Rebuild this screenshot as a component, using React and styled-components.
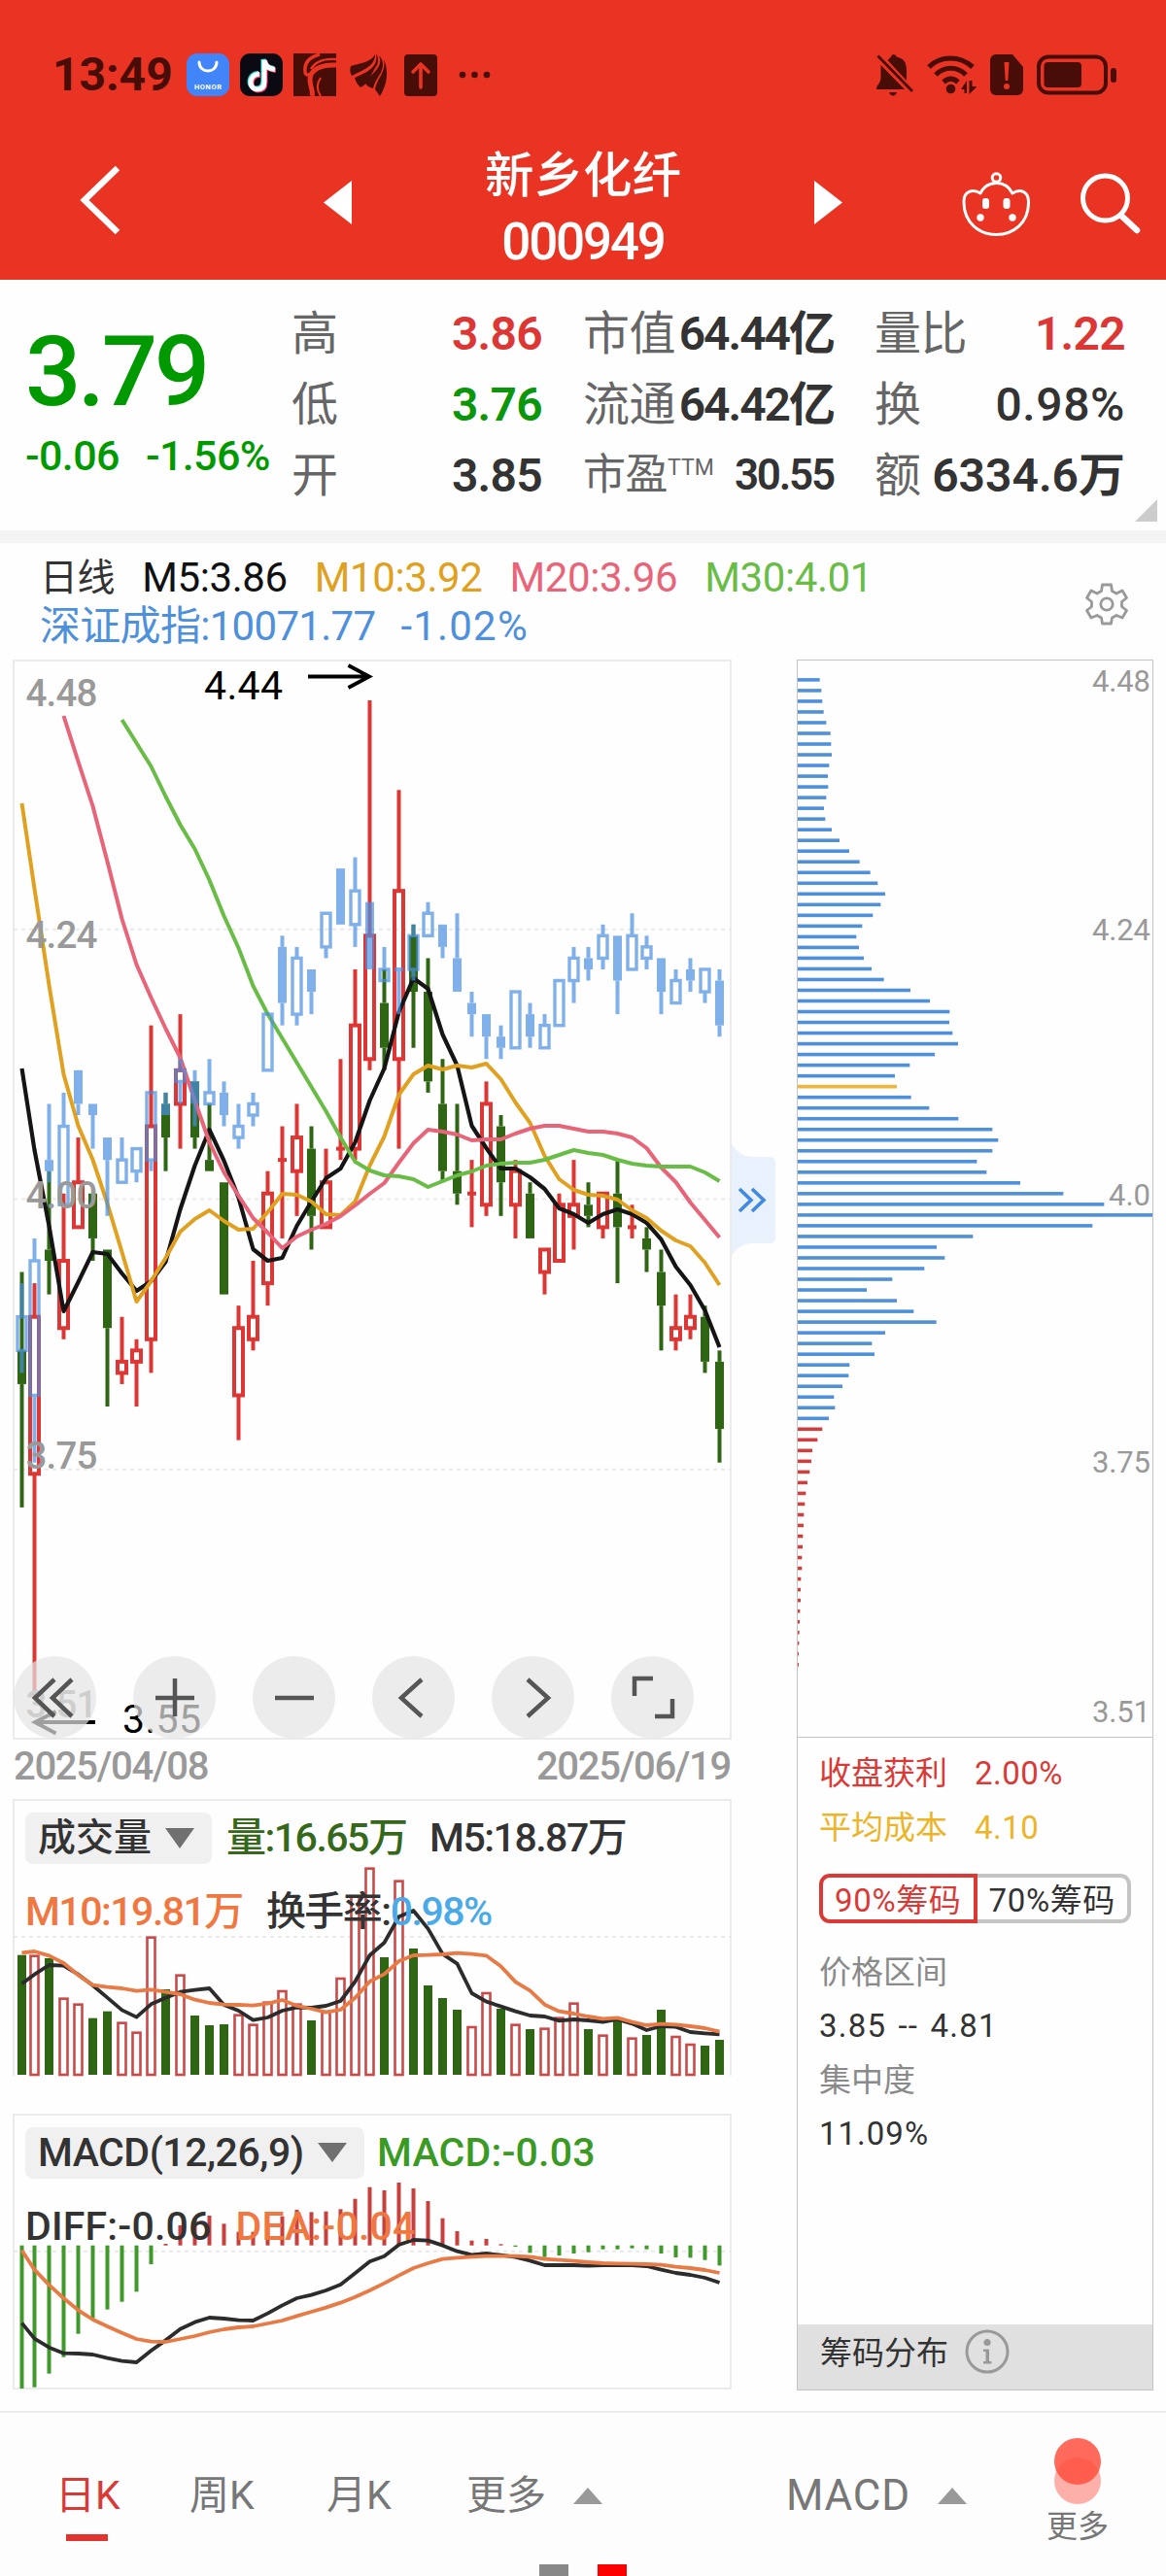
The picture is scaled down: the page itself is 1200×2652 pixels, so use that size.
import React from 'react';
import styled, { createGlobalStyle } from 'styled-components';

const GlobalStyle = createGlobalStyle`
  * {
    box-sizing: border-box;
  }
  body {
    margin: 0;
    background: #fefefe;
    font-family: Roboto, 'Noto Sans CJK SC', sans-serif;
    color: #333;
  }
  svg {
    display: block;
    flex-shrink: 0;
  }
`;

const Page = styled.div`
  width: 1200px;
  height: 2652px;
  overflow: hidden;
  background: #fefefe;
`;

const Header = styled.header`
  height: 288px;
  background: #e93323;
  color: #fff;
`;

const StatusBar = styled.div`
  display: flex;
  align-items: center;
  justify-content: space-between;
  height: 154px;
  padding: 0 50px 0 54px;
  color: #490d08;
`;

const StatusGroup = styled.div`
  display: flex;
  align-items: center;
  gap: ${(p) => p.$gap}px;
`;

const Time = styled.span`
  width: 127px;
  font-size: 48px;
  font-weight: 700;
  line-height: 56px;
`;

const Nav = styled.nav`
  display: flex;
  align-items: flex-start;
  padding-left: 80px;
`;

const NavIcon = styled.div`
  margin: ${(p) => p.$top}px 0 0 ${(p) => p.$left || 0}px;
`;

const TitleBox = styled.div`
  width: 204px;
  margin-left: 136px;
  text-align: center;
  white-space: nowrap;
`;

const StockName = styled.div`
  padding-top: 2px;
  font-size: 50.5px;
  font-weight: 500;
  line-height: 50px;
`;

const StockCode = styled.div`
  margin-top: 15px;
  font-size: 53px;
  font-weight: 500;
  letter-spacing: -2.2px;
  line-height: 56px;
`;

const Quote = styled.section`
  position: relative;
  display: grid;
  grid-template-columns: 258px 258px 258px 258px;
  column-gap: 42px;
  height: 258px;
`;

const PriceBox = styled.div`
  padding: 45px 0 0 26px;
  color: #009a00;
  white-space: nowrap;
`;

const Price = styled.div`
  font-size: 101px;
  font-weight: 500;
  letter-spacing: -3.4px;
  line-height: 100px;
`;

const Change = styled.div`
  display: flex;
  gap: 27px;
  margin-top: 11px;
  font-size: 43px;
  font-weight: 500;
  letter-spacing: -0.6px;
  line-height: 50px;
`;

const QuoteColumn = styled.div`
  padding-top: 19px;
`;

const QuoteRow = styled.div`
  display: flex;
  align-items: center;
  justify-content: space-between;
  height: 73px;
  line-height: 73px;
  white-space: nowrap;
`;

const QuoteLabel = styled.span`
  color: #666;
  font-size: ${(p) => p.$size || 48}px;
  letter-spacing: -0.5px;

  sup {
    position: relative;
    top: -15px;
    font-size: 23px;
    line-height: 0;
    letter-spacing: 0;
    vertical-align: baseline;
  }
`;

const QuoteValue = styled.span`
  color: ${(p) => p.$color || '#333'};
  font-size: ${(p) => p.$size || 48}px;
  font-weight: ${(p) => p.$weight || 600};
  letter-spacing: ${(p) => p.$spacing || -0.7}px;
`;

const Corner = styled.div`
  position: absolute;
  right: 9px;
  bottom: 9px;
  border-left: 23px solid transparent;
  border-bottom: 23px solid #ccc;
`;

const Divider = styled.div`
  height: 13px;
  background: #f4f4f4;
`;

const Indicators = styled.section`
  display: flex;
  justify-content: space-between;
  height: 120px;
  padding: 11px 39px 0 41px;
`;

const IndicatorLine = styled.div`
  display: flex;
  gap: ${(p) => p.$gap}px;
  height: 50px;
  font-size: 42px;
  line-height: 50px;
  letter-spacing: -0.4px;
  white-space: nowrap;
`;

const Colored = styled.span`
  color: ${(p) => p.$color};
  font-size: ${(p) => (p.$size ? `${p.$size}px` : 'inherit')};
  letter-spacing: ${(p) => (p.$spacing ? `${p.$spacing}px` : 'inherit')};
`;

const Content = styled.main`
  display: flex;
  height: 1803px;
  padding-left: 13px;
`;

const Charts = styled.div`
  width: 740px;
`;

const ChartPanel = styled.div`
  position: relative;
  height: ${(p) => p.$height}px;
  margin-top: ${(p) => p.$top || 0}px;
  border: 2px solid #ebebeb;
  border-bottom-width: ${(p) => (p.$open ? 0 : 2)}px;
`;

const ChartSvg = styled.svg`
  position: absolute;
  left: -2px;
  top: -2px;
  overflow: visible;
`;

const PanelText = styled.div`
  position: relative;
  padding: 10px 0 0 11px;
`;

const PanelLine = styled.div`
  display: flex;
  align-items: center;
  height: 76px;
  margin-top: ${(p) => p.$top || 0}px;
  gap: ${(p) => p.$gap}px;
  font-size: 41px;
  font-weight: 500;
  letter-spacing: ${(p) => p.$spacing || -1.3}px;
  line-height: 54px;
  white-space: nowrap;
`;

const Picker = styled.div`
  display: flex;
  align-items: center;
  justify-content: space-between;
  width: ${(p) => p.$width}px;
  height: 53px;
  padding: 0 18px 0 13px;
  border-radius: 8px;
  background: #f0f0f0;
  font-size: ${(p) => p.$size || 39}px;
  letter-spacing: ${(p) => p.$spacing || 0}px;
`;

const Triangle = styled.i`
  width: 0;
  border: ${(p) => p.$w}px solid transparent;
  border-width: ${(p) => (p.$down ? `${p.$h}px ${p.$w}px 0` : `0 ${p.$w}px ${p.$h}px`)};
  border-${(p) => (p.$down ? 'top' : 'bottom')}-color: ${(p) => p.$color};
`;

const Controls = styled.div`
  position: absolute;
  left: -1px;
  bottom: -1px;
  display: flex;
  gap: 38px;
`;

const RoundButton = styled.button`
  display: flex;
  align-items: center;
  justify-content: center;
  width: 85px;
  height: 85px;
  padding: 0;
  border: 0;
  border-radius: 50%;
  background: rgba(228, 228, 228, 0.7);
`;

const Dates = styled.div`
  display: flex;
  justify-content: space-between;
  height: 61px;
  padding: 1px 1px 0 1px;
  color: #999;
  font-size: 40px;
  font-weight: 500;
  letter-spacing: -1.3px;
  line-height: 54px;
`;

const Expander = styled.div`
  margin: 497px 21px 0 -1px;
  width: 47px;
`;

const ChipPanel = styled.aside`
  display: flex;
  flex-direction: column;
  width: 367px;
  height: 1782px;
  border: 1px solid #c4c4c4;
`;

const ChipInfo = styled.div`
  flex: 1;
  padding: 9px 22px 0 22px;
  border-top: 1px solid #c4c4c4;
  font-size: 33px;
`;

const ChipRow = styled.div`
  display: flex;
  gap: 28px;
  height: ${(p) => p.$height || 56}px;
  line-height: ${(p) => p.$height || 56}px;
  color: ${(p) => p.$color || '#333'};
  letter-spacing: ${(p) => p.$spacing || 0}px;
  word-spacing: ${(p) => p.$word || 0}px;
  white-space: nowrap;
`;

const Segments = styled.div`
  display: flex;
  width: 321px;
  height: 51px;
  margin: 19px 0 24px;
`;

const Segment = styled.div`
  flex: 1;
  border: 4px solid ${(p) => (p.$active ? '#d93a36' : '#c4c4c4')};
  border-left-width: ${(p) => (p.$active ? 4 : 0)}px;
  border-radius: ${(p) => (p.$active ? '11px 0 0 11px' : '0 11px 11px 0')};
  color: ${(p) => (p.$active ? '#d93a36' : '#333')};
  font-size: 33px;
  letter-spacing: 0.6px;
  line-height: 47px;
  text-align: center;
  white-space: nowrap;
`;

const ChipFooter = styled.div`
  display: flex;
  align-items: center;
  gap: 17px;
  height: 67px;
  padding: 0 0 11px 23px;
  background: #e0e0e0;
  font-size: 33px;

  span {
    margin-top: -2px;
  }
`;

const BottomBar = styled.footer`
  position: relative;
  display: flex;
  height: 170px;
  border-top: 2px solid #ececec;
  background: #fdfdfd;
  color: #777;
  font-size: 41px;
  line-height: 60px;
  white-space: nowrap;
`;

const Tab = styled.div`
  display: flex;
  align-items: center;
  gap: 28px;
  position: relative;
  height: 60px;
  margin: 55px 0 0 ${(p) => p.$left}px;
  width: ${(p) => p.$width}px;
  color: ${(p) => (p.$active ? '#d93a36' : '#777')};
  font-size: ${(p) => p.$size || 41}px;
  letter-spacing: ${(p) => p.$spacing || 0}px;

  &::after {
    content: '';
    display: ${(p) => (p.$active ? 'block' : 'none')};
    position: absolute;
    left: 11px;
    top: 70px;
    width: 43px;
    height: 7px;
    background: #e0352f;
  }
`;

const MoreTab = styled.div`
  display: flex;
  flex-direction: column;
  align-items: center;
  width: 64px;
  margin: 25px 0 0 76px;
  font-size: 32px;
  line-height: 44px;
`;

const Pager = styled.div`
  position: absolute;
  left: 555px;
  bottom: 0;
  display: flex;
  gap: 30px;
`;

const PageMark = styled.i`
  width: 30px;
  height: 12px;
  background: ${(p) => p.$color};
`;

const RED = '#dc3735';
const GREEN = '#2f6614';
const BLUE = '#4a90e2';

// [high, body top, body bottom, low, rising], prices in cents
const CANDLES = [
  [393, 386, 383, 372, 0], [392, 389, 375, 355, 1], [402, 395, 394, 391, 0], [400, 394, 388, 387, 1],
  [405, 401, 397, 397, 1], [400, 400, 396, 394, 0], [395, 395, 388, 381, 0], [389, 385, 384, 383, 1],
  [387, 386, 385, 381, 1], [415, 406, 387, 384, 1], [409, 408, 405, 402, 0], [416, 411, 408, 404, 1],
  [410, 410, 405, 404, 0], [408, 403, 402, 402, 0], [401, 401, 391, 391, 0], [390, 388, 382, 378, 1],
  [394, 389, 387, 386, 1], [402, 400, 392, 390, 1], [406, 403, 403, 396, 1], [408, 405, 402, 398, 1],
  [406, 404, 398, 395, 0], [404, 401, 397, 397, 1], [412, 404, 404, 403, 1], [420, 415, 404, 403, 1],
  [444, 423, 412, 411, 1], [420, 417, 413, 411, 0], [436, 427, 412, 404, 1], [424, 423, 418, 413, 0],
  [421, 418, 410, 409, 0], [412, 408, 402, 401, 0], [408, 402, 400, 399, 0], [403, 400, 400, 397, 1],
  [410, 408, 399, 398, 1], [407, 406, 401, 398, 0], [403, 402, 399, 396, 1], [401, 400, 396, 396, 0],
  [395, 395, 393, 391, 1], [400, 399, 394, 394, 1], [403, 399, 398, 395, 1], [401, 399, 398, 397, 0],
  [400, 400, 397, 396, 1], [403, 400, 397, 392, 0], [399, 397, 397, 396, 1], [397, 396, 395, 393, 0],
  [395, 393, 390, 386, 0], [391, 388, 387, 386, 1], [391, 389, 388, 387, 1], [390, 389, 385, 384, 0],
  [386, 385, 379, 376, 0],
];

// same layout, for the index overlay
const INDEX_CANDLES = [
  [392, 389, 386, 384, 1], [396, 394, 382, 376, 1], [408, 403, 402, 401, 0], [409, 406, 399, 399, 1],
  [411, 411, 408, 407, 0], [408, 408, 407, 404, 0], [405, 405, 403, 398, 0], [405, 403, 401, 401, 1],
  [404, 404, 402, 401, 1], [409, 409, 403, 402, 1], [409, 408, 407, 407, 0], [412, 411, 410, 408, 1],
  [411, 410, 408, 406, 0], [412, 409, 408, 408, 1], [410, 409, 407, 406, 0], [408, 406, 405, 404, 1],
  [409, 408, 407, 406, 1], [416, 416, 411, 411, 1], [423, 422, 417, 415, 0], [422, 421, 416, 415, 1],
  [420, 420, 418, 416, 0], [425, 425, 422, 421, 1], [429, 429, 424, 424, 0], [430, 427, 424, 422, 1],
  [426, 426, 420, 420, 0], [422, 420, 419, 419, 1], [420, 420, 420, 416, 1], [424, 423, 420, 419, 1],
  [426, 425, 423, 423, 1], [424, 424, 422, 421, 0], [425, 421, 418, 418, 0], [418, 417, 416, 414, 0],
  [416, 416, 414, 412, 0], [415, 414, 413, 412, 0], [418, 418, 413, 413, 1], [417, 416, 414, 413, 0],
  [416, 415, 413, 413, 1], [419, 419, 415, 415, 1], [422, 421, 419, 417, 1], [422, 421, 420, 419, 0],
  [424, 423, 421, 420, 1], [423, 423, 419, 416, 0], [425, 423, 420, 420, 1], [423, 422, 421, 420, 1],
  [421, 421, 418, 416, 0], [420, 419, 417, 417, 1], [421, 420, 419, 418, 0], [420, 420, 418, 417, 1],
  [420, 419, 415, 414, 0],
];

const M5 = [1100, 1184, 1262, 1350, 1320, 1289, 1291, 1311, 1329, 1319, 1299, 1245, 1200, 1163, 1195, 1233, 1286, 1298, 1295, 1262, 1237, 1213, 1203, 1176, 1133, 1100, 1042, 1007, 1018, 1065, 1097, 1159, 1182, 1203, 1203, 1212, 1224, 1244, 1250, 1259, 1250, 1245, 1250, 1259, 1276, 1304, 1323, 1349, 1387];
const M10 = [827, 915, 1014, 1106, 1159, 1194, 1239, 1289, 1340, 1319, 1295, 1268, 1255, 1246, 1257, 1266, 1265, 1248, 1229, 1230, 1237, 1250, 1251, 1237, 1200, 1170, 1127, 1106, 1097, 1101, 1097, 1099, 1095, 1111, 1135, 1156, 1190, 1214, 1225, 1230, 1231, 1235, 1246, 1254, 1267, 1277, 1283, 1300, 1323];
const M20 = [737, 784, 830, 887, 946, 993, 1027, 1059, 1089, 1133, 1176, 1207, 1231, 1254, 1269, 1285, 1273, 1266, 1260, 1252, 1241, 1229, 1218, 1197, 1177, 1163, 1165, 1168, 1174, 1173, 1173, 1167, 1162, 1159, 1159, 1162, 1165, 1165, 1167, 1171, 1182, 1202, 1217, 1238, 1256, 1274];
const M30 = [741, 765, 789, 820, 849, 874, 906, 943, 976, 1015, 1044, 1069, 1094, 1119, 1144, 1171, 1196, 1205, 1210, 1211, 1214, 1222, 1216, 1210, 1206, 1200, 1198, 1197, 1197, 1194, 1189, 1184, 1187, 1189, 1194, 1198, 1200, 1201, 1201, 1201, 1207, 1216];

// sub charts keep their values in thirds of a pixel from the top of their block
const VOLUME = [518, 518, 528, 650, 668, 713, 692, 725, 755, 461, 624, 578, 705, 735, 732, 701, 731, 662, 627, 668, 720, 690, 588, 335, 248, 525, 287, 498, 612, 651, 687, 738, 633, 684, 731, 747, 743, 710, 665, 747, 764, 717, 773, 765, 687, 768, 792, 798, 780];
const VOL_M5 = [607, 578, 549, 551, 578, 612, 650, 688, 710, 670, 650, 632, 626, 621, 672, 690, 719, 711, 690, 680, 681, 675, 660, 600, 519, 480, 400, 381, 437, 515, 545, 636, 662, 677, 692, 705, 708, 721, 717, 720, 725, 717, 730, 750, 738, 740, 756, 760, 763];
const VOL_M10 = [511, 507, 520, 543, 580, 611, 617, 621, 629, 625, 632, 639, 656, 666, 671, 672, 674, 668, 657, 675, 684, 695, 687, 650, 600, 577, 537, 519, 518, 516, 512, 515, 520, 553, 601, 628, 671, 692, 699, 708, 715, 712, 725, 735, 731, 733, 738, 744, 755];
const MACD = [897, 893, 851, 800, 728, 680, 653, 629, 598, 513, 450, 393, 370, 363, 388, 413, 413, 393, 365, 345, 352, 350, 343, 311, 275, 285, 261, 279, 318, 371, 411, 440, 435, 451, 459, 478, 491, 486, 480, 476, 467, 467, 464, 467, 480, 492, 493, 500, 517];
const DIFF = [695, 743, 770, 788, 789, 792, 803, 812, 816, 780, 748, 713, 692, 678, 681, 686, 687, 665, 640, 618, 608, 594, 576, 541, 505, 488, 453, 438, 440, 455, 473, 484, 480, 485, 491, 502, 516, 516, 516, 518, 516, 516, 516, 519, 530, 540, 546, 555, 570];
const DEA = [470, 530, 577, 618, 655, 684, 705, 725, 744, 752, 753, 744, 735, 723, 714, 708, 705, 696, 687, 673, 660, 647, 632, 614, 594, 572, 548, 525, 510, 497, 493, 490, 488, 488, 488, 490, 497, 500, 503, 507, 510, 511, 512, 513, 515, 521, 525, 531, 540];

const CHIPS = [68, 73, 76, 80, 88, 101, 103, 105, 97, 93, 94, 88, 81, 85, 105, 129, 159, 191, 224, 247, 270, 256, 232, 199, 181, 189, 204, 228, 266, 348, 408, 469, 468, 478, 495, 423, 346, 300, 306, 350, 406, 496, 601, 619, 601, 553, 583, 687, 820, 946, 1096, 910, 541, 429, 454, 391, 292, 213, 306, 358, 428, 270, 229, 237, 160, 157, 138, 112, 115, 96, 76, 61, 45, 42, 37, 30, 25, 22, 19, 18, 16, 15, 13, 13, 10, 9, 9, 7, 6, 5, 4, 3, 3];

const xAt = (i) => (i === 0 ? 22.5 : i === 1 ? 35.5 : 50.5 + (i - 2) * 15);
const yAt = (price) => 721 + (444 - price) * 11.54;

function line(values, start = 0, top = 0, scale = 1) {
  return values.map((v, i) => `${xAt(i + start)},${top + v / scale}`).join(' ');
}

function Candle({ x, data, color, hollow, size = 4 }) {
  const [high, top, bottom, low] = data.map(yAt);
  const flat = data[1] === data[2];
  return (
    <g fill={color} stroke="none">
      {top > high && <rect x={x - 2} y={high} width={4} height={top - high} />}
      {low > bottom && <rect x={x - 2} y={bottom} width={4} height={low - bottom} />}
      {flat && <rect x={x - 4.5} y={top - 2} width={9} height={4} />}
      {!flat && !hollow && <rect x={x - 4.5} y={top} width={9} height={bottom - top} />}
      {!flat && hollow && (
        <rect x={x - 4.5} y={top} width={9} height={bottom - top} fill="none" stroke={color} strokeWidth={size} />
      )}
    </g>
  );
}

function Line({ color, points, width = 3.8 }) {
  return <polyline points={points} fill="none" stroke={color} strokeWidth={width} strokeLinejoin="round" />;
}

function GridLine({ y }) {
  return <line x1="14" x2="752" y1={y} y2={y} stroke="#e9e9e9" strokeWidth="2" strokeDasharray="4 4" />;
}

function KLineChart() {
  const labels = [['4.48', 726.5], ['4.24', 976], ['4.00', 1244], ['3.75', 1511.5], ['3.51', 1768]];
  return (
    <ChartSvg width="740" height="1112" viewBox="13 679 740 1112">
      {[956.7, 1234.6, 1512.8].map((y) => (
        <GridLine key={y} y={y} />
      ))}
      {CANDLES.map((c, i) => (
        <Candle key={i} x={xAt(i)} data={c.slice(0, 4)} color={c[4] ? RED : GREEN} hollow={c[4] === 1} />
      ))}
      <Line color="#151515" points={line(M5)} width={4.2} />
      <Line color="#e0a020" points={line(M10)} width={4} />
      <Line color="#e86478" points={line(M20, 3)} width={4} />
      <Line color="#69bd47" points={line(M30, 7)} width={4} />
      {INDEX_CANDLES.map((c, i) => (
        <g key={i} opacity="0.7">
          <Candle x={xAt(i)} data={c.slice(0, 4)} color={BLUE} hollow={c[4] === 1} size={3.4} />
        </g>
      ))}
      <g fill="#999" fontSize="38.5" fontWeight="500">
        {labels.map(([text, y]) => (
          <text key={text} x="26.500" y={y} textLength="74">{text}</text>
        ))}
      </g>
      <g fill="#000" fontSize="41">
        <text x="210" y="720" textLength="81">4.44</text>
        <text x="126" y="1784" textLength="81">3.55</text>
      </g>
      <g fill="none" stroke="#000" strokeWidth="3.800">
        <path d="M317 696.5H380M358.500 685L380 696.500L358.500 708" />
        <path d="M98 1773H36M57.500 1762L36 1773L57.500 1784.500" />
      </g>
    </ChartSvg>
  );
}

function VolumeChart() {
  return (
    <ChartSvg width="740" height="285" viewBox="13 1852 740 285">
      <GridLine y={1994} />
      {VOLUME.map((v, i) => {
        const top = 1840 + v / 3;
        return CANDLES[i][4] ? (
          <rect key={i} x={xAt(i) - 4} y={top + 1} width="8" height={2135 - top} fill="#fff" stroke="#c94a48" strokeWidth="2.600" />
        ) : (
          <rect key={i} x={xAt(i) - 4.5} y={top} width="9" height={2136 - top} fill={GREEN} />
        );
      })}
      <Line color="#2c2c2c" points={line(VOL_M5, 0, 1840, 3)} />
      <Line color="#e87a46" points={line(VOL_M10, 0, 1840, 3)} />
    </ChartSvg>
  );
}

function MacdChart() {
  return (
    <ChartSvg width="740" height="284" viewBox="13 2176 740 284">
      <GridLine y={2317.7} />
      {MACD.map((v, i) => {
        const y = 2160 + v / 3;
        const zero = 2311.7;
        return (
          <rect
            key={i}
            x={xAt(i) - 2}
            y={Math.min(y, zero)}
            width="4"
            height={Math.abs(y - zero)}
            fill={y > zero ? '#3f9a2b' : '#c8403e'}
          />
        );
      })}
      <Line color="#2c2c2c" points={line(DIFF, 0, 2160, 3)} />
      <Line color="#e87a46" points={line(DEA, 0, 2160, 3)} />
    </ChartSvg>
  );
}

function ChipChart() {
  const labels = [['4.48', 712], ['4.24', 967.5], ['4.0', 1241], ['3.75', 1515.5], ['3.51', 1772.5]];
  return (
    <svg width="365" height="1108" viewBox="821 680 365 1108">
      {CHIPS.map((w, i) => (
        <rect
          key={i}
          x="821"
          y={698.1 + i * 11.02}
          width={w / 3}
          height="3.600"
          fill={i === 38 ? '#f0b53a' : i < 70 ? '#4f90da' : '#cf3f3e'}
        />
      ))}
      <g fill="#999" fontSize="31" textAnchor="end">
        {labels.map(([text, y]) => (
          <text key={text} x="1184" y={y} textLength={text.length === 4 ? 60 : 43}>{text}</text>
        ))}
      </g>
    </svg>
  );
}

function StatusIcons() {
  return (
    <>
      <svg width="44" height="44" viewBox="0 0 44 44">
        <rect width="44" height="44" rx="11" fill="#4285f8" />
        <path d="M13 9C13 21 31 21 31 9" fill="none" stroke="#fff" strokeWidth="3" strokeLinecap="round" />
        <text x="22" y="37" fill="#fff" fontSize="7.500" fontWeight="700" textAnchor="middle" textLength="28">HONOR</text>
      </svg>
      <svg width="44" height="44" viewBox="0 0 44 44">
        <rect width="44" height="44" rx="10" fill="#0b0a12" />
        <g fill="none" strokeWidth="5">
          <path d="M19 20.500C8 20 7 36 17 36C22 36 24 33 24 28V6C25 12 29 15 35 15.500" stroke="#35e5e0" />
          <path d="M21 22.500C10 22 9 38 19 38C24 38 26 35 26 30V8C27 14 31 17 37 17.500" stroke="#f2335a" />
          <path d="M20 21.500C9 21 8 37 18 37C23 37 25 34 25 29V7C26 13 30 16 36 16.500" stroke="#fff" />
        </g>
      </svg>
      <svg width="44" height="44" viewBox="0 0 44 44">
        <rect width="44" height="44" fill="#490d08" />
        <g fill="none" stroke="#e93323">
          <path d="M27 1C15 4 11 10 12 19C12 22 15 23 17 21" strokeWidth="3.400" />
          <path d="M44 6C31 5 22 9 18 16" strokeWidth="2.400" />
          <path d="M44 12C28 11 17 17 17 27C17 35 21 39 19 44" strokeWidth="5" />
          <path d="M28 25C24 31 24 38 28 44" strokeWidth="2" />
        </g>
      </svg>
      <svg width="48" height="44" viewBox="0 0 48 44" fill="#490d08">
        <path d="M4 13C14 10 25 9 29 1C29 13 17 17 5 23C3 20 3 16 4 13Z" />
        <path d="M30 0C32 10 28 17 8 25C9 29 11 32 14 35C22 32 24 22 31 12C33 7 32 3 30 0Z" />
        <path d="M33 2C36 9 35 15 18 29C20 33 23 35 27 36C29 26 37 21 37 11C37 7 35 4 33 2Z" />
        <path d="M38 6C41 18 31 26 29 37L34 44C42 31 43 18 38 6Z" />
      </svg>
      <svg width="34" height="43" viewBox="0 0 34 43">
        <rect width="34" height="43" rx="4" fill="#490d08" />
        <path d="M17 34V11M9 18L17 10L25 18" fill="none" stroke="#e93323" strokeWidth="3.600" strokeLinecap="round" strokeLinejoin="round" />
      </svg>
      <svg width="44" height="10" viewBox="0 0 44 10" fill="#490d08">
        <circle cx="15" cy="5" r="3.300" />
        <circle cx="27.500" cy="5" r="3.300" />
        <circle cx="40" cy="5" r="3.300" />
      </svg>
    </>
  );
}

function SystemIcons() {
  return (
    <>
      <svg width="38" height="44" viewBox="0 0 38 44" fill="#490d08">
        <path d="M4.500 12V25C4.500 31 0 32 0 37H29Z" />
        <path d="M11.500 7L31 28V18C31 9 28 5 20.500 3.500C20 0 15.500 0 15 3.500Z" />
        <path d="M1.500 2.500L37 39" stroke="#490d08" strokeWidth="2.800" />
        <path d="M13 40H21C20 44.500 14 44.500 13 40Z" />
      </svg>
      <svg width="51" height="42" viewBox="0 0 51 42">
        <g fill="none" stroke="#490d08" strokeWidth="5.200">
          <path d="M2 13C14 1 34 1 47 13" />
          <path d="M9 21C18 12 31 12 40 21" />
          <path d="M17 28.500C22 24 27 24 32 28.500" />
        </g>
        <circle cx="24.500" cy="35.500" r="4.800" fill="#490d08" />
        <path d="M35 36L41 27V40H38.500V36ZM43.500 27H46.500V33H51.500L43.500 41Z" fill="#490d08" />
      </svg>
      <svg width="34" height="42" viewBox="0 0 34 42">
        <path d="M6 0H23L34 13V36A6 6 0 0 1 28 42H6A6 6 0 0 1 0 36V6A6 6 0 0 1 6 0Z" fill="#490d08" />
        <path d="M14.500 8H19.500L18.300 27H15.700Z" fill="#e93323" />
        <circle cx="17" cy="33" r="3" fill="#e93323" />
      </svg>
      <svg width="83" height="42" viewBox="0 0 83 42">
        <rect x="2" y="2.500" width="69" height="37" rx="10" fill="none" stroke="#490d08" strokeWidth="4" />
        <rect x="7.500" y="8" width="38.500" height="26" rx="4" fill="#490d08" />
        <rect x="76" y="14" width="6" height="15" rx="3" fill="#490d08" />
      </svg>
    </>
  );
}

function RobotIcon() {
  return (
    <svg width="70" height="66" viewBox="0 0 70 66" fill="none" stroke="#fff" strokeWidth="3">
      <circle cx="35.500" cy="6" r="4.300" />
      <path d="M19 22C26 8 45 8 52 22C60 17 68 20 68.500 30C70 76 1 76 2 30C2 20 11 17 19 22Z" strokeLinejoin="round" />
      <g fill="#fff" stroke="none">
        <rect x="21" y="27" width="7" height="11" rx="3" />
        <rect x="42.500" y="27" width="7" height="11" rx="3" />
        <circle cx="19" cy="47" r="3.700" />
        <circle cx="52" cy="47" r="3.700" />
      </g>
    </svg>
  );
}

function GearIcon() {
  return (
    <svg width="44" height="44" viewBox="0 0 44 44" fill="none" stroke="#999" strokeWidth="2.800" strokeLinejoin="round">
      <path d="M17.500 2H26.500L27.500 8.500L32 11L38 8L42.500 15.500L37.500 19.500V24.500L42.500 28.500L38 36L32 33.500L27.500 36L26.500 42H17.500L16.500 36L12 33.500L6 36L1.500 28.500L6.500 24.500V19.500L1.500 15.500L6 8L12 11L16.500 8.500Z" />
      <circle cx="22" cy="22" r="6.200" />
    </svg>
  );
}

const CONTROL_PATHS = [
  'M42 24L22 43L42 62M60 24L40 43L60 62',
  'M43 23V62M23 43H63',
  'M23 43H63',
  'M51 24L30 43L51 62',
  'M37 24L58 43L37 62',
  'M24 41V23H43M45 62H63V44',
];

const QUOTES = [
  [
    { label: '高', value: '3.86', color: '#dc3735' },
    { label: '低', value: '3.76', color: '#0b960b' },
    { label: '开', value: '3.85' },
  ],
  [
    { label: '市值', value: '64.44亿', spacing: -2 },
    { label: '流通', value: '64.42亿', spacing: -2 },
    { label: '市盈', sup: 'TTM', value: '30.55', size: 44, spacing: -2.2 },
  ],
  [
    { label: '量比', value: '1.22', color: '#dc3735' },
    { label: '换', value: '0.98%', weight: 500, spacing: 0.6 },
    { label: '额', value: '6334.6万', spacing: 0.01 },
  ],
];

function App() {
  return (
    <Page>
      <GlobalStyle />
      <Header>
        <StatusBar>
          <StatusGroup $gap={11}>
            <Time>13:49</Time>
            <StatusIcons />
          </StatusGroup>
          <StatusGroup $gap={14}>
            <SystemIcons />
          </StatusGroup>
        </StatusBar>
        <Nav>
          <NavIcon $top={14}>
            <svg width="46" height="76" viewBox="0 0 46 76">
              <path d="M41 5L7 38L41 71" fill="none" stroke="#fff" strokeWidth="6.500" />
            </svg>
          </NavIcon>
          <NavIcon $top={32} $left={207}>
            <svg width="29" height="45" viewBox="0 0 29 45">
              <path d="M29 0V45L0 22.500Z" fill="#fff" />
            </svg>
          </NavIcon>
          <TitleBox>
            <StockName>新乡化纤</StockName>
            <StockCode>000949</StockCode>
          </TitleBox>
          <NavIcon $top={32} $left={136}>
            <svg width="29" height="45" viewBox="0 0 29 45">
              <path d="M0 0V45L29 22.500Z" fill="#fff" />
            </svg>
          </NavIcon>
          <NavIcon $top={23} $left={123}>
            <RobotIcon />
          </NavIcon>
          <NavIcon $top={23} $left={50}>
            <svg width="66" height="66" viewBox="0 0 66 66" fill="none" stroke="#fff">
              <circle cx="27.500" cy="27" r="23" strokeWidth="5" />
              <path d="M44 45L60 60" strokeWidth="6.500" strokeLinecap="round" />
            </svg>
          </NavIcon>
        </Nav>
      </Header>

      <Quote>
        <PriceBox>
          <Price>3.79</Price>
          <Change>
            <span>-0.06</span>
            <span>-1.56%</span>
          </Change>
        </PriceBox>
        {QUOTES.map((column, i) => (
          <QuoteColumn key={i}>
            {column.map((q) => (
              <QuoteRow key={q.label}>
                <QuoteLabel $size={q.size}>
                  {q.label}
                  {q.sup && <sup>{q.sup}</sup>}
                </QuoteLabel>
                <QuoteValue $color={q.color} $size={q.size} $weight={q.weight} $spacing={q.spacing}>
                  {q.value}
                </QuoteValue>
              </QuoteRow>
            ))}
          </QuoteColumn>
        ))}
        <Corner />
      </Quote>
      <Divider />

      <Indicators>
        <div>
          <IndicatorLine $gap={28}>
            <Colored $color="#333" $size={39}>日线</Colored>
            <Colored $color="#111">M5:3.86</Colored>
            <Colored $color="#e0a020">M10:3.92</Colored>
            <Colored $color="#e86478">M20:3.96</Colored>
            <Colored $color="#69bd47">M30:4.01</Colored>
          </IndicatorLine>
          <IndicatorLine $gap={26}>
            <Colored $color="#4f90dc" $spacing={-0.7}>深证成指:10071.77</Colored>
            <Colored $color="#4f90dc" $spacing={1.2}>-1.02%</Colored>
          </IndicatorLine>
        </div>
        <NavIcon $top={30}>
          <GearIcon />
        </NavIcon>
      </Indicators>

      <Content>
        <Charts>
          <ChartPanel $height={1112}>
            <KLineChart />
            <Controls>
              {CONTROL_PATHS.map((d) => (
                <RoundButton key={d}>
                  <svg width="85" height="85" viewBox="0 0 85 85">
                    <path d={d} fill="none" stroke="#555" strokeWidth="4.500" />
                  </svg>
                </RoundButton>
              ))}
            </Controls>
          </ChartPanel>
          <Dates>
            <span>2025/04/08</span>
            <span>2025/06/19</span>
          </Dates>
          <ChartPanel $height={285} $open>
            <VolumeChart />
            <PanelText>
              <PanelLine $gap={15} $top={-10} $spacing={-1.5}>
                <Picker $width={192}>
                  成交量
                  <Triangle $down $w={15} $h={21} $color="#707070" />
                </Picker>
                <Colored $color="#35681a">量:16.65万</Colored>
                <Colored $color="#333">&nbsp;M5:18.87万</Colored>
              </PanelLine>
              <PanelLine $gap={24} $spacing={-1.5}>
                <Colored $color="#f07840">M10:19.81万</Colored>
                <span>
                  换手率:<Colored $color="#4aaae8">0.98%</Colored>
                </span>
              </PanelLine>
            </PanelText>
          </ChartPanel>
          <ChartPanel $height={284} $top={39}>
            <MacdChart />
            <PanelText>
              <PanelLine $gap={13} $top={-10} $spacing={0.2}>
                <Picker $width={349} $size={41} $spacing={-0.5}>
                  MACD(12,26,9)
                  <Triangle $down $w={15} $h={20} $color="#707070" />
                </Picker>
                <Colored $color="#3a9a24">MACD:-0.03</Colored>
              </PanelLine>
              <PanelLine $gap={25} $spacing={0.2}>
                <Colored $color="#333">DIFF:-0.06</Colored>
                <Colored $color="#f07840">DEA:-0.04</Colored>
              </PanelLine>
            </PanelText>
          </ChartPanel>
        </Charts>

        <Expander>
          <svg width="46" height="118" viewBox="0 0 46 118">
            <path d="M0 0C6 10 12 15 23 15H40Q46 15 46 21V98Q46 104 40 104H23C12 104 6 109 0 118Z" fill="#e8f1fc" />
            <path d="M9 48L21 59.500L9 71M22 48L34 59.500L22 71" fill="none" stroke="#4389e0" strokeWidth="3.600" />
          </svg>
        </Expander>

        <ChipPanel>
          <ChipChart />
          <ChipInfo>
            <ChipRow $color="#d93a36">
              <span>收盘获利</span>
              <Colored $spacing={0.5}>2.00%</Colored>
            </ChipRow>
            <ChipRow $color="#edb427">
              <span>平均成本</span>
              <Colored $spacing={0.5}>4.10</Colored>
            </ChipRow>
            <Segments>
              <Segment $active>90%筹码</Segment>
              <Segment>70%筹码</Segment>
            </Segments>
            <ChipRow $color="#8a8a8a" $height={54}>价格区间</ChipRow>
            <ChipRow $spacing={1.2} $word={3}>3.85 -- 4.81</ChipRow>
            <ChipRow $color="#8a8a8a" $height={56}>集中度</ChipRow>
            <ChipRow $height={54} $spacing={1}>11.09%</ChipRow>
          </ChipInfo>
          <ChipFooter>
            <span>筹码分布</span>
            <svg width="46" height="46" viewBox="0 0 46 46">
              <circle cx="23" cy="23" r="21" fill="none" stroke="#999" strokeWidth="3" />
              <circle cx="23" cy="13.500" r="3.600" fill="#999" />
              <path d="M19 20.500H25V33H27.500V35.500H19V33H21.500V23H19Z" fill="#999" />
            </svg>
          </ChipFooter>
        </ChipPanel>
      </Content>

      <BottomBar>
        <Tab $left={57} $width={68} $active>日K</Tab>
        <Tab $left={70} $width={72}>周K</Tab>
        <Tab $left={69} $width={72}>月K</Tab>
        <Tab $left={72} $width={142}>
          更多
          <Triangle $w={15} $h={17} $color="#999" />
        </Tab>
        <Tab $left={187} $width={192} $size={44} $spacing={0.8}>
          MACD
          <Triangle $w={15} $h={17} $color="#999" />
        </Tab>
        <MoreTab>
          <svg width="50" height="70" viewBox="0 0 50 70">
            <circle cx="25" cy="45" r="24" fill="#fdb0aa" />
            <circle cx="25" cy="25" r="24" fill="#ff5040" fillOpacity="0.850" />
          </svg>
          更多
        </MoreTab>
        <Pager>
          <PageMark $color="#888" />
          <PageMark $color="#f00" />
        </Pager>
      </BottomBar>
    </Page>
  );
}

export default App;
